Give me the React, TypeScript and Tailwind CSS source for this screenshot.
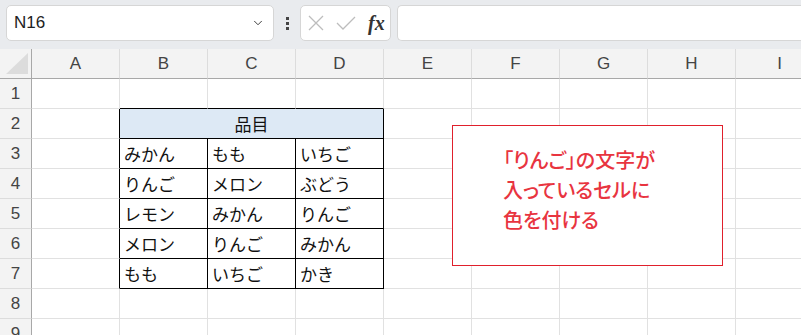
import { ChevronDown } from 'lucide-react';

const cols = ['A', 'B', 'C', 'D', 'E', 'F', 'G', 'H', 'I'];
const rows = [1, 2, 3, 4, 5, 6, 7, 8, 9];

const data: Record<number, string[]> = {
  3: ['みかん', 'もも', 'いちご'],
  4: ['りんご', 'メロン', 'ぶどう'],
  5: ['レモン', 'みかん', 'りんご'],
  6: ['メロン', 'りんご', 'みかん'],
  7: ['もも', 'いちご', 'かき']
};

const jp = "font-['Yu_Gothic','Noto_Sans_CJK_JP',sans-serif]";

function Cell({ row, col }: { row: number; col: number }) {
  // col: 0 = A ... 8 = I
  const inTable = row >= 2 && row <= 7 && col >= 1 && col <= 3;
  const leftOfTable = row >= 2 && row <= 7 && col === 0;
  const aboveTable = row === 1 && col >= 1 && col <= 3;
  let cls = 'h-[30px] border-r border-b border-[#e1e1e1] bg-white';
  if (inTable) cls = 'h-[30px] border-r border-b border-black bg-white';
  else if (leftOfTable) cls = 'h-[30px] border-r border-b border-r-black border-b-[#e1e1e1] bg-white';
  else if (aboveTable) cls = 'h-[30px] border-r border-b border-r-[#e1e1e1] border-b-black bg-white';
  const text = inTable && data[row] ? data[row][col - 1] : '';
  return (
    <div className={`${cls} flex items-center pl-[4px] text-[17px] text-[#111] ${jp}`}>
      {text}
    </div>
  );
}

export default function App() {
  return (
    <div className="relative h-[335px] w-[801px] overflow-hidden bg-white font-['Segoe_UI','Liberation_Sans',sans-serif]">
      {/* formula bar */}
      <div className="flex h-[49px] items-start bg-[#e9ebee] pt-[5px] pl-[6px]">
        <div className="flex h-[36px] w-[268px] items-center justify-between rounded-[5px] border border-[#d6d6d6] bg-white pl-[7px] pr-[8px] text-[17px] text-[#222]">
          <span>N16</span>
          <ChevronDown size={14} strokeWidth={1.6} className="text-[#333]" />
        </div>
        <div className="flex h-[36px] w-[26px] flex-col items-center justify-center gap-[2px]">
          <span className="h-[3px] w-[3px] bg-[#444]" />
          <span className="h-[3px] w-[3px] bg-[#444]" />
          <span className="h-[3px] w-[3px] bg-[#444]" />
        </div>
        <div className="flex h-[36px] w-[91px] items-center rounded-[5px] border border-[#d6d6d6] bg-white pl-[7px]">
          <svg width="16" height="16" viewBox="0 0 16 16" className="text-[#bdbdbd]">
            <path d="M1 1 L15 15 M15 1 L1 15" stroke="currentColor" strokeWidth="1.3" fill="none" />
          </svg>
          <svg width="20" height="16" viewBox="0 0 20 16" className="ml-[12px] text-[#bdbdbd]">
            <path d="M1 8 L7 14 L19 2" stroke="currentColor" strokeWidth="1.3" fill="none" />
          </svg>
          <span className="ml-[12px] font-['Liberation_Serif',serif] text-[20px] font-bold italic leading-none text-[#333]">fx</span>
        </div>
        <div className="ml-[6px] h-[36px] flex-1 rounded-l-[5px] border border-r-0 border-[#d6d6d6] bg-white" />
      </div>

      {/* sheet */}
      <div className="grid grid-cols-[32px_repeat(9,88px)]">
        <div className="relative h-[30px] border-r border-b border-[#a8a8a8] bg-[#f3f3f3]">
          <svg className="absolute top-[4px] left-[6px]" width="23" height="22" viewBox="0 0 23 22">
            <polygon points="22,0 22,21 0,21" fill="#dcdcdc" />
          </svg>
        </div>
        {cols.map((c) => (
          <div
            key={c}
            className="flex h-[30px] items-center justify-center border-r border-b border-r-[#dcdcdc] border-b-[#a8a8a8] bg-[#f3f3f3] text-[17px] text-[#444]"
          >
            {c}
          </div>
        ))}
        {rows.map((r) => (
          <RowCells key={r} row={r} />
        ))}
      </div>

      {/* shape */}
      <div className={`absolute top-[125px] left-[452px] flex h-[141px] w-[271px] flex-col border border-[#e0202c] bg-white pt-[19px] pl-[50px] text-[20px] font-medium leading-[30px] text-[#e8343f] [font-feature-settings:'palt'] ${jp}`}>
        <span>「りんご」の文字が</span>
        <span>入っているセルに</span>
        <span>色を付ける</span>
      </div>
    </div>
  );
}

function RowCells({ row }: { row: number }) {
  const header = (
    <div className="flex h-[30px] items-center justify-center border-r border-b border-r-[#a8a8a8] border-b-[#dcdcdc] bg-[#f3f3f3] text-[17px] text-[#444]">
      {row}
    </div>
  );
  if (row === 2) {
    return (
      <>
        {header}
        <Cell row={2} col={0} />
        <div className={`col-span-3 flex h-[30px] items-center justify-center border-r border-b border-black bg-[#dde9f5] text-[17px] text-[#111] ${jp}`}>
          品目
        </div>
        {[4, 5, 6, 7, 8].map((c) => (
          <Cell key={c} row={2} col={c} />
        ))}
      </>
    );
  }
  return (
    <>
      {header}
      {cols.map((_, i) => (
        <Cell key={i} row={row} col={i} />
      ))}
    </>
  );
}
